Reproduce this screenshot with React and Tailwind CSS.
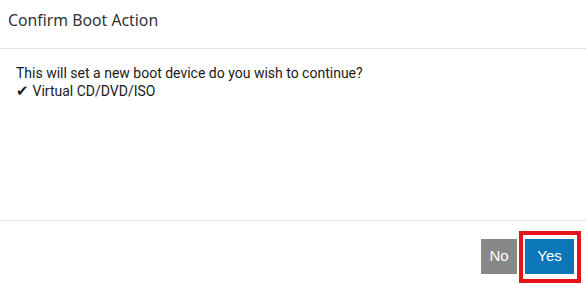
export default function App() {
  return (
    <div className="w-[586px] h-[284px] bg-white flex flex-col relative overflow-hidden">
      <div className="h-[49px] border-b border-[#e3e3e3] px-[8px] pt-[8px]">
        <div className="text-[15.8px] leading-[24px] text-[#333333] font-['Noto_Sans',sans-serif]">
          Confirm Boot Action
        </div>
      </div>
      <div className="flex-1 px-[16px] pt-[15px] font-['Roboto',sans-serif] text-[14px] leading-[18px] text-[#1a1a1a]">
        <div>This will set a new boot device do you wish to continue?</div>
        <div>
          <span className="text-[15px]">✔</span> Virtual CD/DVD/ISO
        </div>
      </div>
      <div className="h-[64px] border-t border-[#e3e3e3] flex justify-end items-start pt-[18px] pr-[12px] gap-[8px] font-['Liberation_Sans',sans-serif]">
        <button className="w-[36px] h-[35px] bg-[#888888] text-white text-[15px]">No</button>
        <div className="relative">
          <button className="w-[49px] h-[35px] bg-[#0b77b9] text-white text-[15px]">Yes</button>
          <div className="absolute left-[-6px] top-[-8px] w-[62px] h-[52px] border-[4px] border-[#e8141c]" />
        </div>
      </div>
    </div>
  );
}
